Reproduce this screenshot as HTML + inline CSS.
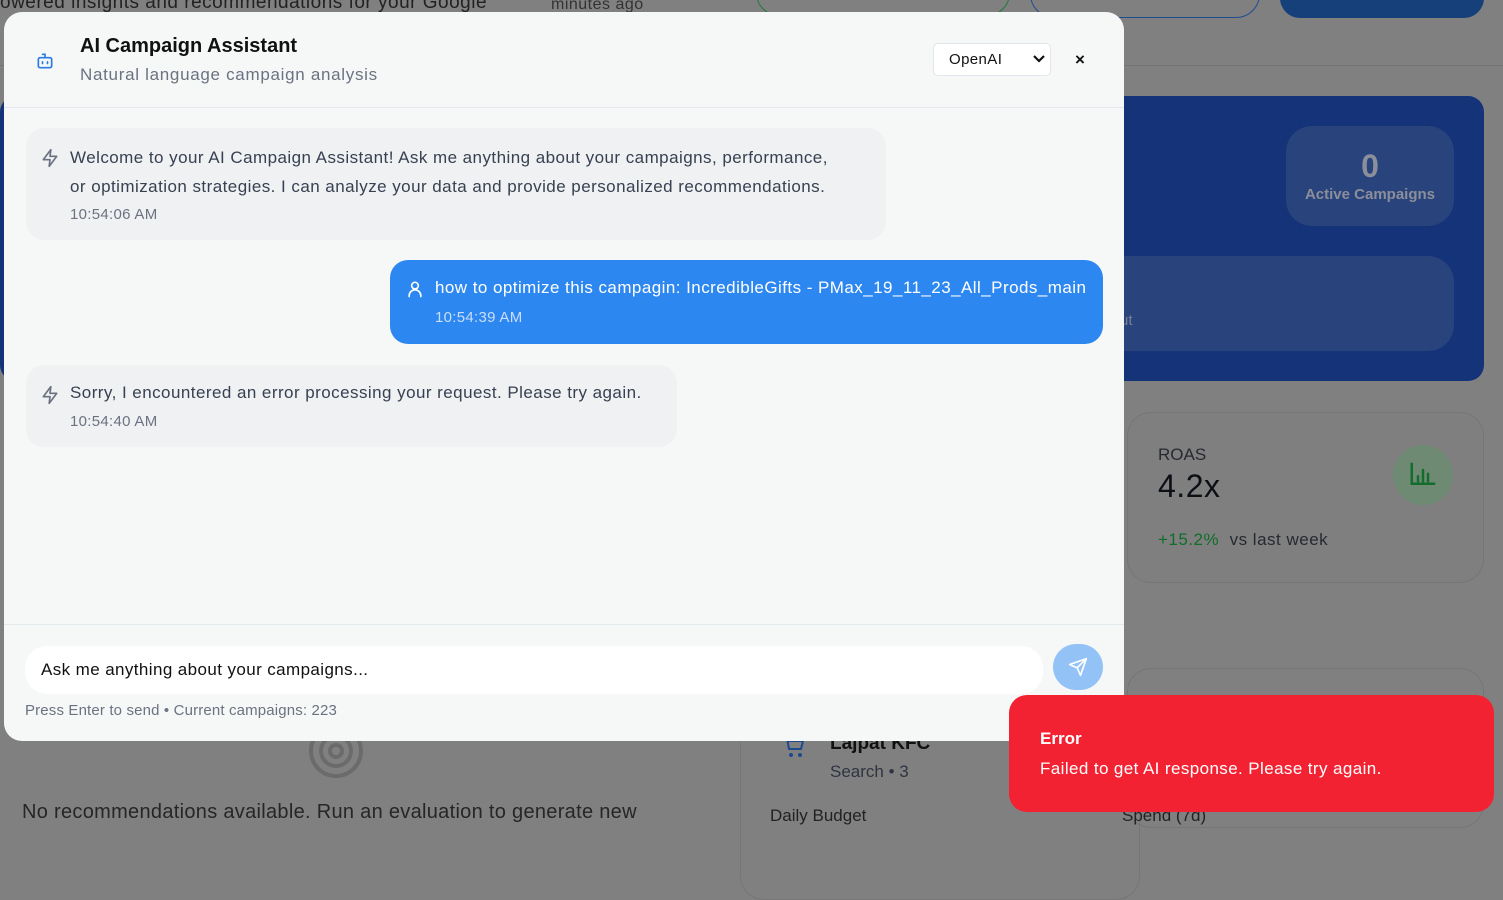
<!DOCTYPE html>
<html><head><meta charset="utf-8"><style>
*{box-sizing:border-box;margin:0;padding:0}
body{width:1503px;height:824px;overflow:hidden;background:#808080;font-family:"Liberation Sans",sans-serif;position:relative}
.abs{position:absolute}
.modal{left:4px;top:12px;width:1120px;height:729px;background:#f6f8f8;border-radius:18px;overflow:hidden}
.bub{position:absolute;background:#f0f1f3;border-radius:18px;color:#374151;font-size:17px;letter-spacing:0.45px}
.ts{font-size:15px;color:#6b7280;letter-spacing:0.3px}
</style></head><body>
<div class="abs" style="left:0;top:-8px;font-size:19px;color:#222;letter-spacing:0.5px">owered insights and recommendations for your Google</div>
<div class="abs" style="left:551px;top:-4px;font-size:16px;color:#333;letter-spacing:0.5px">minutes ago</div>
<div class="abs" style="left:756px;top:-30px;width:254px;height:46px;border:1px solid #1f7a3a;border-radius:24px"></div>
<div class="abs" style="left:1030px;top:-30px;width:230px;height:48px;border:1px solid #1f4b8f;border-radius:24px"></div>
<div class="abs" style="left:1280px;top:-30px;width:204px;height:48px;background:#15407a;border-radius:20px"></div>
<div class="abs" style="left:0;top:65px;width:1503px;height:1px;background:#747474"></div>
<div class="abs" style="left:0;top:96px;width:1484px;height:285px;background:#153378;border-radius:16px"></div>
<div class="abs" style="left:1286px;top:126px;width:168px;height:100px;background:#29437d;border-radius:26px;text-align:center;color:#8a8f9a">
<div style="font-size:32px;font-weight:bold;margin-top:20px;line-height:40px">0</div><div style="font-size:15px;font-weight:bold">Active Campaigns</div></div>
<div class="abs" style="left:1100px;top:256px;width:354px;height:95px;background:#29437d;border-radius:26px"></div>
<div class="abs" style="left:1120px;top:312px;color:#7a8094;font-size:15px">ut</div>
<div class="abs" style="left:1127px;top:412px;width:357px;height:171px;border:1px solid #767676;border-radius:24px;background:#7f7f7f"></div>
<div class="abs" style="left:1158px;top:445px;font-size:17px;color:#262a30">ROAS</div>
<div class="abs" style="left:1158px;top:468px;font-size:32px;color:#0c0f14;letter-spacing:0.5px">4.2x</div>
<div class="abs" style="left:1393px;top:445px;width:60px;height:60px;border-radius:30px;background:#6f8a73"></div>
<svg class="abs" style="left:1408px;top:460px" width="30" height="30" viewBox="0 0 24 24" fill="none" stroke="#146c2e" stroke-width="2" stroke-linecap="round"><path d="M3 3v16h18M8 17v-4M12 17V8M16 17v-6"/></svg>
<div class="abs" style="left:1158px;top:530px;font-size:17px;color:#262a30;letter-spacing:0.5px"><span style="color:#0f6e2a">+15.2%</span>&nbsp; vs last week</div>
<div class="abs" style="left:1127px;top:668px;width:357px;height:160px;border:1px solid #767676;border-radius:24px"></div>
<div class="abs" style="left:740px;top:700px;width:400px;height:200px;border:1px solid #767676;border-radius:24px"></div>
<div class="abs" style="left:830px;top:733px;font-size:19px;font-weight:bold;color:#111">Lajpat KFC</div>
<div class="abs" style="left:830px;top:762px;font-size:17px;color:#2e3440">Search • 3</div>
<div class="abs" style="left:770px;top:806px;font-size:17px;color:#222">Daily Budget</div>
<div class="abs" style="left:1122px;top:806px;font-size:17px;color:#222">Spend (7d)</div>
<svg class="abs" style="left:780px;top:735px" width="28" height="24" viewBox="0 0 24 24" fill="none" stroke="#1c4a8c" stroke-width="2"><path d="M2 3h3l2 11h12l2-8H6"/><circle cx="9" cy="20" r="1"/><circle cx="18" cy="20" r="1"/></svg>
<svg class="abs" style="left:307px;top:722px" width="58" height="58" viewBox="0 0 58 58" fill="none" stroke="#6b6b6b" stroke-width="4"><circle cx="29" cy="29" r="25"/><circle cx="29" cy="29" r="15"/><circle cx="29" cy="29" r="6"/></svg>
<div class="abs" style="left:22px;top:801px;font-size:20px;color:#262626;letter-spacing:0.3px">No recommendations available. Run an evaluation to generate new</div>

<div class="abs modal">
<svg class="abs" style="left:30px;top:39px" width="22" height="20" viewBox="0 0 24 24" fill="none" stroke="#2b7ae6" stroke-width="2" stroke-linecap="round"><rect x="4" y="8" width="16" height="12" rx="2"/><path d="M12 8V4H9M9 13v2M15 13v2"/></svg>
<div class="abs" style="left:76px;top:23px;font-size:20px;font-weight:bold;color:#111">AI Campaign Assistant</div>
<div class="abs" style="left:76px;top:53px;font-size:17px;color:#6b7280;letter-spacing:0.7px">Natural language campaign analysis</div>
<div class="abs" style="left:929px;top:31px;width:118px;height:33px;background:#fff;border:1px solid #e2e5e9;border-radius:5px;font-size:15px;color:#111;padding:7px 0 0 15px;letter-spacing:0.4px">OpenAI</div>
<svg class="abs" style="left:1028px;top:41px" width="14" height="12" viewBox="0 0 14 12"><path d="M2 3l5 5 5-5" stroke="#111" stroke-width="2.2" fill="none"/></svg>
<div class="abs" style="left:1071px;top:38px;font-size:17px;font-weight:bold;color:#111">×</div>
<div class="abs" style="left:0;top:95px;width:1120px;height:1px;background:#e3e8ec"></div>

<div class="bub" style="left:22px;top:116px;width:860px;height:112px">
<svg class="abs" style="left:14px;top:20px" width="20" height="20" viewBox="0 0 24 24" fill="none" stroke="#6b7280" stroke-width="2" stroke-linejoin="round"><path d="M13 2L4 14h8l-1 8 9-12h-8z"/></svg>
<div class="abs" style="left:44px;top:15px;line-height:29px;width:768px">Welcome to your AI Campaign Assistant! Ask me anything about your campaigns, performance, or optimization strategies. I can analyze your data and provide personalized recommendations.</div>
<div class="abs ts" style="left:44px;top:78px">10:54:06 AM</div></div>

<div class="bub" style="left:386px;top:248px;width:713px;height:84px;background:#2d87f0;color:#fff">
<svg class="abs" style="left:15px;top:19px" width="20" height="20" viewBox="0 0 24 24" fill="none" stroke="#fff" stroke-width="2" stroke-linecap="round"><circle cx="12" cy="8" r="4"/><path d="M5 21v-1a7 7 0 0114 0v1"/></svg>
<div class="abs" style="left:45px;top:18px;white-space:nowrap">how to optimize this campagin: IncredibleGifts - PMax_19_11_23_All_Prods_main</div>
<div class="abs" style="left:45px;top:49px;font-size:15px;color:#c9defb;letter-spacing:0.3px">10:54:39 AM</div></div>

<div class="bub" style="left:22px;top:353px;width:651px;height:82px">
<svg class="abs" style="left:14px;top:20px" width="20" height="20" viewBox="0 0 24 24" fill="none" stroke="#6b7280" stroke-width="2" stroke-linejoin="round"><path d="M13 2L4 14h8l-1 8 9-12h-8z"/></svg>
<div class="abs" style="left:44px;top:18px;white-space:nowrap">Sorry, I encountered an error processing your request. Please try again.</div>
<div class="abs ts" style="left:44px;top:48px">10:54:40 AM</div></div>

<div class="abs" style="left:0;top:612px;width:1120px;height:1px;background:#e3e8ec"></div>
<div class="abs" style="left:21px;top:634px;width:1018px;height:48px;background:#fff;border-radius:22px;font-size:17px;color:#111;padding:14px 0 0 16px;letter-spacing:0.4px">Ask me anything about your campaigns...</div>
<div class="abs" style="left:1049px;top:632px;width:50px;height:46px;border-radius:25px;background:#93c2f7"></div>
<svg class="abs" style="left:1064px;top:645px" width="20" height="20" viewBox="0 0 24 24" fill="none" stroke="#fff" stroke-width="2" stroke-linejoin="round"><path d="M22 2L11 13M22 2l-7 20-4-9-9-4z"/></svg>
<div class="abs" style="left:21px;top:690px;font-size:15px;color:#6b7280;letter-spacing:0.15px">Press Enter to send • Current campaigns: 223</div>
</div>

<div class="abs" style="left:1009px;top:695px;width:485px;height:117px;background:#f32232;border-radius:18px;color:#fff">
<div class="abs" style="left:31px;top:34px;font-size:17px;font-weight:bold">Error</div>
<div class="abs" style="left:31px;top:64px;font-size:17px;letter-spacing:0.4px">Failed to get AI response. Please try again.</div></div>
</body></html>
